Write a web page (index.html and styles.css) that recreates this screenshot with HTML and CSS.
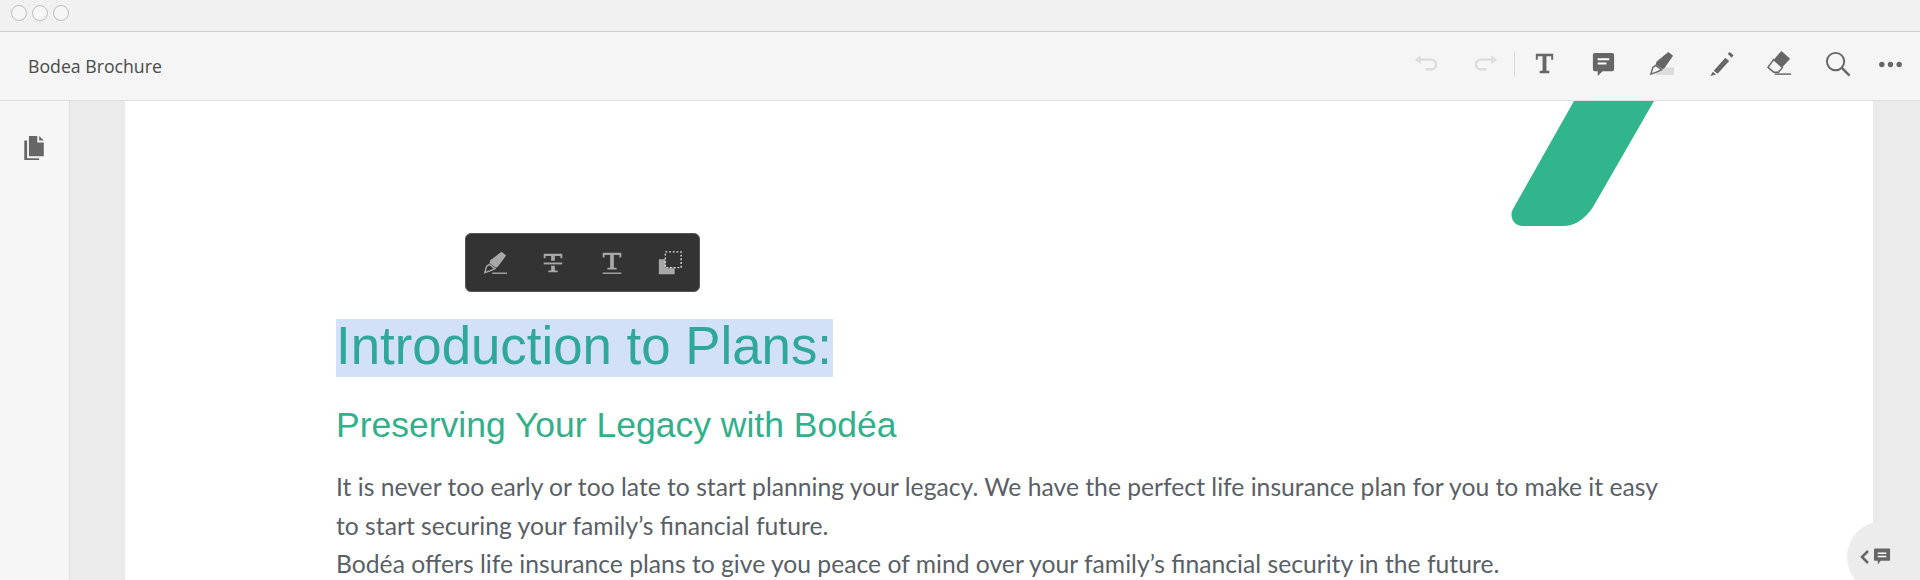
FILE: index.html
```html
<!DOCTYPE html>
<html lang="en">

<head>
    <meta charset="UTF-8">
    <title>Bodea Brochure</title>
    <link rel="stylesheet" href="styles.css">
</head>

<body>
    <div class="titlebar">
        <span class="dot"></span>
        <span class="dot"></span>
        <span class="dot"></span>
    </div>

    <header class="toolbar">
        <div class="doc-name">Bodea Brochure</div>
        <div class="tools">
            <svg class="tool" viewBox="0 0 28 28"><path d="M6 10h13a5 5 0 0 1 0 10h-6" fill="none" stroke="#dcdcdc" stroke-width="2.500"/><path d="M2 10l6-4.500v9z" fill="#dcdcdc"/></svg>
            <svg class="tool" viewBox="0 0 28 28"><path d="M22 10H9a5 5 0 0 0 0 10h6" fill="none" stroke="#dcdcdc" stroke-width="2.500"/><path d="M26 10l-6-4.500v9z" fill="#dcdcdc"/></svg>
            <span class="sep"></span>
            <svg class="tool" viewBox="0 0 28 28"><path d="M5 10V4h18v6h-2V6.500h-5v15h3V24H9v-2.500h3v-15H7V10z" fill="#666"/></svg>
            <svg class="tool" viewBox="0 0 28 28"><path d="M5 3h18a2 2 0 0 1 2 2v15a2 2 0 0 1-2 2H13l-5 5v-5H5a2 2 0 0 1-2-2V5a2 2 0 0 1 2-2z" fill="#666"/><path d="M8 9.500h12M8 14h9" stroke="#fff" stroke-width="2"/></svg>
            <svg class="tool" viewBox="0 0 28 28"><rect x="8" y="18" width="19" height="8" fill="#dcdcdc"/><path d="M21 2l5 4-9 13-2 1-7-5 1-3z" fill="#666"/><path d="M8 16l6 4.500-4 2-7 2.500 2-7z" fill="#f5f5f5" stroke="#666" stroke-width="1.500"/></svg>
            <svg class="tool" viewBox="0 0 28 28"><path d="M19 8l4 3.500-12 13-4-3zM21.500 4l2-2 4 3.500-2 2.500zM6 22.500l3.500 3-6 1.500z" fill="#666"/></svg>
            <svg class="tool" viewBox="0 0 28 28"><path d="M16 1l9 8-8 9-9-8z" fill="#666"/><path d="M8 10l9 8-4 5H8l-6-5z" fill="#f5f5f5" stroke="#666" stroke-width="1.500"/><path d="M9 25h17" stroke="#666" stroke-width="1.500"/></svg>
            <svg class="tool" viewBox="0 0 28 28"><circle cx="12" cy="12" r="9" fill="none" stroke="#666" stroke-width="2"/><path d="M18.500 18.500l8 8" stroke="#666" stroke-width="2.500"/></svg>
            <svg class="tool more" viewBox="0 0 28 28"><circle cx="5" cy="15" r="2.800" fill="#666"/><circle cx="14" cy="15" r="2.800" fill="#666"/><circle cx="23" cy="15" r="2.800" fill="#666"/></svg>
        </div>
    </header>

    <div class="workspace">
        <aside class="rail">
            <svg class="pages-icon" viewBox="0 0 24 28"><path d="M1 6h3v19h13v2H1z" fill="#666"/><path d="M6 1h9v7h7v15H6z" fill="#666"/><path d="M17 1l5 5h-5z" fill="#666"/></svg>
        </aside>

        <main class="viewer">
            <div class="page">
                <svg class="swoosh" viewBox="0 0 146 126"><path d="M63 0H143L82 106C74 118 64 125 52 125H12C2 125-2 115 2 108z" fill="#31b58d"/></svg>

                <div class="markup-bar">
                    <svg class="mk" viewBox="0 0 28 28"><path d="M21 2l5 4-9 12-2 1-7-5 1-3z" fill="#a8a8a8"/><path d="M8 15.500l6 4.500-4 2-7 2.500 2-7z" fill="#333" stroke="#a8a8a8" stroke-width="1.500"/><path d="M11 25h16" stroke="#a8a8a8" stroke-width="1.500"/></svg>
                    <svg class="mk" viewBox="0 0 28 28"><path d="M4 9V4h20v5h-2V6.500h-6v5h-4v-5H6V9zM12 17h4v5h3v2H9v-2h3z" fill="#a8a8a8"/><path d="M4 14.500h20" stroke="#a8a8a8" stroke-width="2"/></svg>
                    <svg class="mk" viewBox="0 0 28 28"><path d="M4 8V3h20v5h-2V5.500h-6V19h3v2H9v-2h3V5.500H6V8z" fill="#a8a8a8"/><path d="M4 25h20" stroke="#a8a8a8" stroke-width="1.500"/></svg>
                    <svg class="mk" viewBox="0 0 28 28"><path d="M2 10h8v10h9v6H2z" fill="#a8a8a8"/><path d="M10 10h9v10h-9z" fill="#a8a8a8"/><rect x="9" y="2" width="17" height="17" fill="#333" stroke="#ddd" stroke-width="1.500" stroke-dasharray="2 2"/></svg>
                </div>

                <div class="content">
                    <h1 class="title"><span class="picked">Introduction to Plans:</span></h1>
                    <h2 class="subtitle">Preserving Your Legacy with Bodéa</h2>
                    <p class="body-text">It is never too early or too late to start planning your legacy. We have the perfect life insurance plan for you to make it easy to start securing your family’s financial future.<br>Bodéa offers life insurance plans to give you peace of mind over your family’s financial security in the future.</p>
                </div>
            </div>
        </main>

        <div class="comment-tab">
            <svg class="tab-arrow" viewBox="0 0 10 16"><path d="M8 2L2 8l6 6" fill="none" stroke="#666" stroke-width="2.500"/></svg>
            <svg class="tab-bubble" viewBox="0 0 18 18"><path d="M1 0h15a1 1 0 0 1 1 1v11a1 1 0 0 1-1 1H7l-3 4v-4H1a1 1 0 0 1-1-1V1a1 1 0 0 1 1-1z" fill="#666"/><path d="M4 5h9M4 8.500h9" stroke="#fff" stroke-width="1.500"/></svg>
        </div>
    </div>
</body>

</html>
```

FILE: styles.css
```css
body {
    margin: 0;
    height: 580px;
    overflow: hidden;
    display: flex;
    flex-direction: column;
    background-color: #f4f4f4;
    font-family: "Open Sans", sans-serif;
}

.titlebar {
    height: 32px;
    flex: none;
    display: flex;
    align-items: center;
    gap: 5px;
    padding: 0 0 5px 11px;
    box-sizing: border-box;
    background-color: #f1f1f1;
    border-bottom: 1px solid #cfcfcf;
}

.dot {
    width: 14px;
    height: 14px;
    border: 1px solid #bdbdbd;
    border-radius: 50%;
    background-color: #f6f6f6;
}

.toolbar {
    height: 69px;
    flex: none;
    box-sizing: border-box;
    display: flex;
    align-items: center;
    justify-content: space-between;
    padding: 0 16px 0 28px;
    background-color: #f5f5f5;
    border-bottom: 1px solid #dedede;
}

.doc-name {
    font-size: 17.700px;
    color: #4a4a4a;
}

.tools {
    display: flex;
    align-items: center;
    gap: 31.700px;
    margin-bottom: 5px;
}

.tool {
    width: 27px;
    height: 27px;
}

.sep {
    width: 1px;
    height: 26px;
    margin: 0 -16px;
    background-color: #d8d8d8;
}

.more {
    margin-left: -6px;
}

.workspace {
    flex: 1;
    display: flex;
    position: relative;
    min-height: 0;
}

.rail {
    width: 69px;
    flex: none;
    padding-top: 34px;
    text-align: center;
    background-color: #f6f6f6;
    border-right: 1px solid #dedede;
}

.pages-icon {
    width: 23px;
    height: 26px;
}

.viewer {
    flex: 1;
    display: flex;
    overflow: hidden;
    padding: 0 47px 0 55px;
    background-color: #ebebeb;
}

.page {
    flex: 1;
    position: relative;
    background-color: #fff;
}

.swoosh {
    position: absolute;
    left: 1386px;
    top: 0;
    width: 146px;
    height: 126px;
}

.markup-bar {
    position: absolute;
    left: 340px;
    top: 132px;
    width: 235px;
    height: 59px;
    box-sizing: border-box;
    display: flex;
    align-items: center;
    justify-content: space-between;
    padding: 0 16px;
    background-color: #333;
    border: 1px solid #555;
    border-radius: 6px;
}

.mk {
    width: 26px;
    height: 26px;
}

.content {
    padding: 218px 0 0 211px;
}

.title {
    margin: 0;
    font-family: "Liberation Sans", Arial, sans-serif;
    font-weight: normal;
    font-size: 52.800px;
    line-height: 54px;
    color: #2fa79b;
}

.picked {
    display: inline-block;
    padding: 0 1px 4px 0;
    background-color: #d2e0f8;
}

.subtitle {
    margin: 26px 0 0;
    font-family: "Liberation Sans", Arial, sans-serif;
    font-weight: normal;
    font-size: 35.500px;
    line-height: 44px;
    color: #31b08b;
}

.body-text {
    width: 1340px;
    margin: 21px 0 0;
    font-family: Lato, sans-serif;
    font-size: 24.700px;
    line-height: 38.500px;
    color: #5a5f67;
}

.comment-tab {
    position: absolute;
    right: 0;
    bottom: -13px;
    width: 73px;
    height: 72px;
    display: flex;
    align-items: center;
    gap: 4px;
    padding-left: 13px;
    box-sizing: border-box;
    background-color: #ececec;
    border-radius: 36px 0 0 36px;
}

.tab-arrow {
    width: 10px;
    height: 16px;
}

.tab-bubble {
    width: 17px;
    height: 18px;
}
```
